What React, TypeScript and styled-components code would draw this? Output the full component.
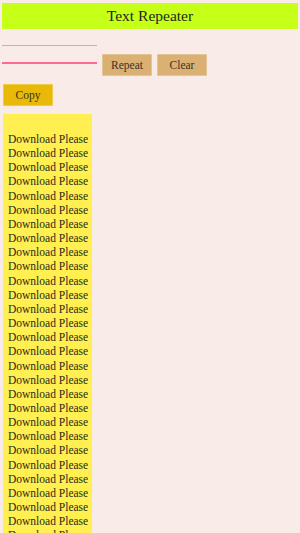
import React from 'react';
import styled, { createGlobalStyle } from 'styled-components';

const GlobalStyle = createGlobalStyle`
  html, body {
    margin: 0;
    padding: 0;
    background: #f9ebe8;
  }
  body {
    font-family: "Liberation Serif", "DejaVu Serif", serif;
    color: #2b2b2b;
  }
`;

const Page = styled.div`
  padding: 3px 2px 0 2px;
  min-height: 100vh;
  box-sizing: border-box;
`;

const Header = styled.h1`
  margin: 0;
  height: 26px;
  background: #c6ff17;
  display: flex;
  align-items: center;
  justify-content: center;
  font-size: 15.5px;
  font-weight: 400;
  color: #1f1f1f;
`;

const Controls = styled.div`
  display: flex;
  align-items: flex-start;
  margin-top: 2px;
`;

const Inputs = styled.div`
  display: flex;
  flex-direction: column;
  width: 95px;
  gap: 2px;
`;

const Field = styled.input<{ focused?: boolean }>`
  box-sizing: content-box;
  width: 95px;
  height: 14px;
  padding: 0;
  border: none;
  outline: none;
  background: transparent;
  border-bottom: ${(p) => (p.focused ? '2px solid #ff6b8e' : '1px solid #c6b0ad')};
  font-family: inherit;
  font-size: 11px;
`;

const Button = styled.button<{ bg: string }>`
  width: 50px;
  height: 22px;
  padding: 0;
  border: 1px solid rgba(255, 255, 255, 0.25);
  border-radius: 1px;
  background: ${(p) => p.bg};
  color: #3a3226;
  font-family: inherit;
  font-size: 11.5px;
  cursor: pointer;
`;

const ButtonGroup = styled.div`
  display: flex;
  gap: 5px;
  margin-top: 23px;
  margin-left: 5px;
`;

const CopyRow = styled.div`
  margin-top: 8px;
  padding-left: 1px;
`;

const Output = styled.div`
  margin-top: 8px;
  margin-left: 1px;
  width: 89px;
  box-sizing: border-box;
  background: #ffef50;
  padding: 18px 0 0 5px;
  font-size: 11.5px;
  line-height: 14.15px;
  color: #2a2a1a;
  white-space: nowrap;
`;

const Line = styled.div``;

const App: React.FC = () => {
  const lines = Array.from({ length: 29 }, () => 'Download Please');

  return (
    <Page>
      <GlobalStyle />
      <Header>Text Repeater</Header>
      <Controls>
        <Inputs>
          <Field type="text" />
          <Field type="number" focused />
        </Inputs>
        <ButtonGroup>
          <Button bg="#dbb173">Repeat</Button>
          <Button bg="#dbb173">Clear</Button>
        </ButtonGroup>
      </Controls>
      <CopyRow>
        <Button bg="#e8b908">Copy</Button>
      </CopyRow>
      <Output>
        {lines.map((l, i) => (
          <Line key={i}>{l}</Line>
        ))}
      </Output>
    </Page>
  );
};

export default App;
